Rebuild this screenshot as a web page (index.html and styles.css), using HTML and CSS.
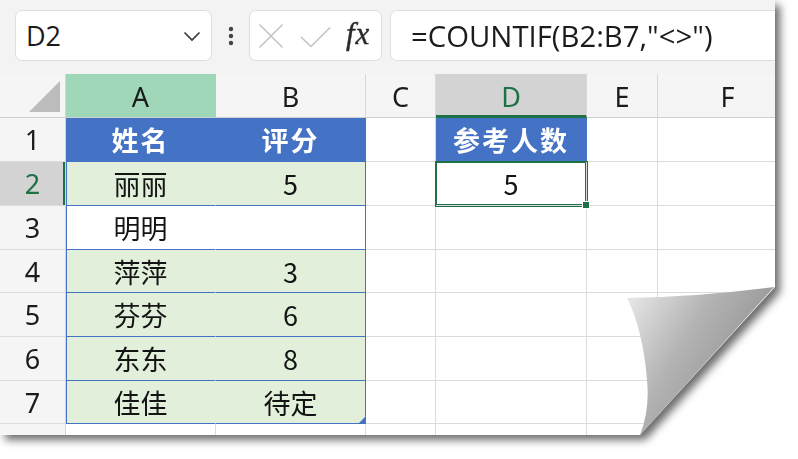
FILE: index.html
```html
<!DOCTYPE html>
<html lang="zh-CN">
<head>
<meta charset="utf-8">
<title>COUNTIF 参考人数</title>
<link rel="stylesheet" href="styles.css">
</head>
<body>
<div class="page">
  <div class="sheet">
    <div class="toolbar">
      <div class="namebox">
        <span class="ref">D2</span>
        <svg class="chev" width="18" height="11" viewBox="0 0 18 11"><polyline points="1.5,1.5 9,9 16.5,1.5" fill="none" stroke="#3a3a3a" stroke-width="1.7"/></svg>
      </div>
      <div class="more">
        <svg width="6" height="20" viewBox="0 0 6 20"><circle cx="3" cy="3" r="2.2" fill="#444"/><circle cx="3" cy="10" r="2.2" fill="#444"/><circle cx="3" cy="17" r="2.2" fill="#444"/></svg>
      </div>
      <div class="fxbox">
        <svg class="x" width="26" height="26" viewBox="0 0 26 26"><path d="M1.5 1.5 L24.5 24.5 M24.5 1.5 L1.5 24.5" stroke="#c3c3c3" stroke-width="1.6" fill="none"/></svg>
        <svg class="ok" width="31" height="22" viewBox="0 0 31 22"><polyline points="1,11 11,20.5 30,1.5" fill="none" stroke="#c3c3c3" stroke-width="1.6"/></svg>
        <span class="fx">fx</span>
      </div>
      <div class="formula">=COUNTIF(B2:B7,"&lt;&gt;")</div>
    </div>

    <div class="grid">
      <!-- column headers -->
      <div class="corner"><span class="tri"></span></div>
      <div class="ch hl">A</div>
      <div class="ch">B</div>
      <div class="ch">C</div>
      <div class="ch act">D</div>
      <div class="ch">E</div>
      <div class="ch">F</div>

      <!-- row 1 -->
      <div class="rh">1</div>
      <div class="c t ta head">姓名</div>
      <div class="c t tb head">评分</div>
      <div class="c"></div>
      <div class="c head dhead">参考人数</div>
      <div class="c"></div>
      <div class="c"></div>

      <!-- row 2 -->
      <div class="rh cur">2</div>
      <div class="c t ta fill">丽丽</div>
      <div class="c t tb fill">5</div>
      <div class="c"></div>
      <div class="c selected">5</div>
      <div class="c"></div>
      <div class="c"></div>

      <!-- row 3 -->
      <div class="rh">3</div>
      <div class="c t ta">明明</div>
      <div class="c t tb"></div>
      <div class="c"></div>
      <div class="c"></div>
      <div class="c"></div>
      <div class="c"></div>

      <!-- row 4 -->
      <div class="rh">4</div>
      <div class="c t ta fill">萍萍</div>
      <div class="c t tb fill">3</div>
      <div class="c"></div>
      <div class="c"></div>
      <div class="c"></div>
      <div class="c"></div>

      <!-- row 5 -->
      <div class="rh">5</div>
      <div class="c t ta fill">芬芬</div>
      <div class="c t tb fill">6</div>
      <div class="c"></div>
      <div class="c"></div>
      <div class="c"></div>
      <div class="c"></div>

      <!-- row 6 -->
      <div class="rh">6</div>
      <div class="c t ta fill">东东</div>
      <div class="c t tb fill">8</div>
      <div class="c"></div>
      <div class="c"></div>
      <div class="c"></div>
      <div class="c"></div>

      <!-- row 7 -->
      <div class="rh">7</div>
      <div class="c t ta fill">佳佳</div>
      <div class="c t tb fill last">待定</div>
      <div class="c"></div>
      <div class="c"></div>
      <div class="c"></div>
      <div class="c"></div>

      <!-- row 8 (cut off) -->
      <div class="rh"></div>
      <div class="c"></div>
      <div class="c"></div>
      <div class="c"></div>
      <div class="c"></div>
      <div class="c"></div>
      <div class="c"></div>
    </div>
  </div>

  <!-- turned-up corner of the sheet -->
  <svg class="curl" width="798" height="459" viewBox="0 0 798 459">
    <defs>
      <linearGradient id="flap" gradientUnits="userSpaceOnUse" x1="628" y1="300" x2="760" y2="380">
        <stop offset="0" stop-color="#e6e6e6"/>
        <stop offset="0.45" stop-color="#b3b3b3"/>
        <stop offset="1" stop-color="#8e8e8e"/>
      </linearGradient>
    </defs>
    <path d="M627 298 Q700 297 774 287 L640 435 Q650 410 647 380 Q643 330 627 298 Z" fill="url(#flap)"/>
  </svg>
</div>
</body>
</html>
```
FILE: styles.css
```css
html, body {
  margin: 0;
  padding: 0;
  background: #ffffff;
}

body {
  width: 798px;
  height: 459px;
  overflow: hidden;
}

/* the sheet with its drop shadow; the curl sits inside so it shares the shadow */
.page {
  position: relative;
  width: 775px;
  height: 435px;
  filter: drop-shadow(5px 5px 4px rgba(0, 0, 0, 0.58));
}

.sheet {
  width: 775px;
  height: 435px;
  background: #ffffff;
  display: flex;
  flex-direction: column;
  overflow: hidden;
  clip-path: polygon(0 0, 775px 0, 775px 287px, 640px 435px, 0 435px);
  font-family: "Noto Sans", "Noto Sans CJK SC", sans-serif;
  color: #1b1b1b;
}

.curl {
  position: absolute;
  left: 0;
  top: 0;
  pointer-events: none;
}

/* ---------- formula bar ---------- */
.toolbar {
  height: 74px;
  flex: none;
  box-sizing: border-box;
  padding: 10px 0 13px 15px;
  background: #f3f3f3;
  display: flex;
  align-items: stretch;
}

.namebox {
  width: 197px;
  box-sizing: border-box;
  background: #ffffff;
  border: 1px solid #dedede;
  border-radius: 7px;
  display: flex;
  align-items: center;
  justify-content: space-between;
  padding: 0 10px 0 10px;
}

.ref {
  font-family: "Open Sans", "Noto Sans", sans-serif;
  font-size: 27px;
  color: #1b1b1b;
}

.chev {
  display: block;
  margin-top: 2px;
}

.more {
  width: 37px;
  display: flex;
  align-items: center;
  justify-content: center;
}

.more svg { display: block; }

.fxbox {
  width: 133px;
  box-sizing: border-box;
  background: #ffffff;
  border: 1px solid #dedede;
  border-radius: 7px;
  display: flex;
  align-items: center;
  padding: 0 0 0 8px;
}

.fxbox svg { display: block; }
.fxbox .ok { margin-left: 16px; margin-top: 3px; }

.fx {
  margin-left: 15px;
  font-family: "Liberation Serif", serif;
  font-style: italic;
  font-size: 31px;
  color: #2a2a2a;
  letter-spacing: 1px;
  line-height: 1;
  margin-top: -4px;
  -webkit-text-stroke: 0.4px #2a2a2a;
}

.formula {
  flex: 1;
  margin-left: 8px;
  margin-right: -12px;
  background: #ffffff;
  border: 1px solid #dedede;
  border-radius: 7px;
  display: flex;
  align-items: center;
  padding-left: 20px;
  font-family: "Open Sans", "Noto Sans", sans-serif;
  font-size: 29.3px;
  color: #1b1b1b;
}

/* ---------- cells ---------- */
.grid {
  flex: 1;
  display: grid;
  grid-template-columns: 66px 150px 150px 70px 151px 71px 140px;
  grid-template-rows: 44px 44px 44px 44px 43px 44px 44px 43px 20px;
  font-size: 27px;
}

.grid > div {
  box-sizing: border-box;
  display: flex;
  align-items: center;
  justify-content: center;
}

.corner {
  background: #f5f5f5;
  border-right: 1px solid #d6d6d6;
  border-bottom: 1px solid #d0d0d0;
  justify-content: flex-end !important;
  align-items: flex-end !important;
  padding: 0 5px 5px 0;
}

.tri {
  width: 0;
  height: 0;
  border-left: 31px solid transparent;
  border-bottom: 31px solid #bcbcbc;
}

.ch {
  background: #f5f5f5;
  border-right: 1px solid #d8d8d8;
  border-bottom: 1px solid #d0d0d0;
  font-family: "Noto Sans", sans-serif;
  font-size: 27px;
  color: #1b1b1b;
  padding-top: 2px;
}

.ch.hl {
  background: #a0d7b9;
  border-right-color: #a0d7b9;
}

.ch.act {
  background: #d3d3d3;
  color: #1e7145;
  border-bottom: 3px solid #1e7145;
  padding-top: 4px;
}

.rh {
  background: #f5f5f5;
  border-right: 1px solid #d6d6d6;
  border-bottom: 1px solid #dcdcdc;
  font-family: "Noto Sans", sans-serif;
  font-size: 27px;
  color: #1b1b1b;
}

.rh.cur {
  background: #d3d3d3;
  color: #1e7145;
  box-shadow: inset -2px 0 0 #1e7145;
}

.c {
  border-right: 1px solid #dcdcdc;
  border-bottom: 1px solid #dcdcdc;
  font-family: "Noto Sans CJK SC", "Noto Sans", sans-serif;
  font-size: 27px;
  color: #141414;
}

/* the named table A1:B7 */
.t { border-bottom-color: #4472c4; }
.ta {
  border-right-color: transparent;
  box-shadow: inset 1px 0 0 #4472c4;
}
.tb { border-right-color: #4472c4; }

.fill { background: #e2efda; }

.head {
  background: #4472c4;
  color: #ffffff;
  font-weight: 700;
  font-size: 27px;
  letter-spacing: 2px;
}

.dhead {
  border-right-color: #4472c4;
  border-bottom-color: #4472c4;
}

.last { position: relative; }
.last::after {
  content: "";
  position: absolute;
  right: 0;
  bottom: 0;
  width: 0;
  height: 0;
  border-left: 6px solid transparent;
  border-bottom: 6px solid #4472c4;
}

.selected {
  position: relative;
  box-shadow: 0 0 0 1px #1e7145, inset 0 0 0 1px #1e7145;
  z-index: 1;
}

.selected::after {
  content: "";
  position: absolute;
  right: -4px;
  bottom: -4px;
  width: 6px;
  height: 6px;
  background: #1e7145;
  border: 1px solid #ffffff;
}
```
